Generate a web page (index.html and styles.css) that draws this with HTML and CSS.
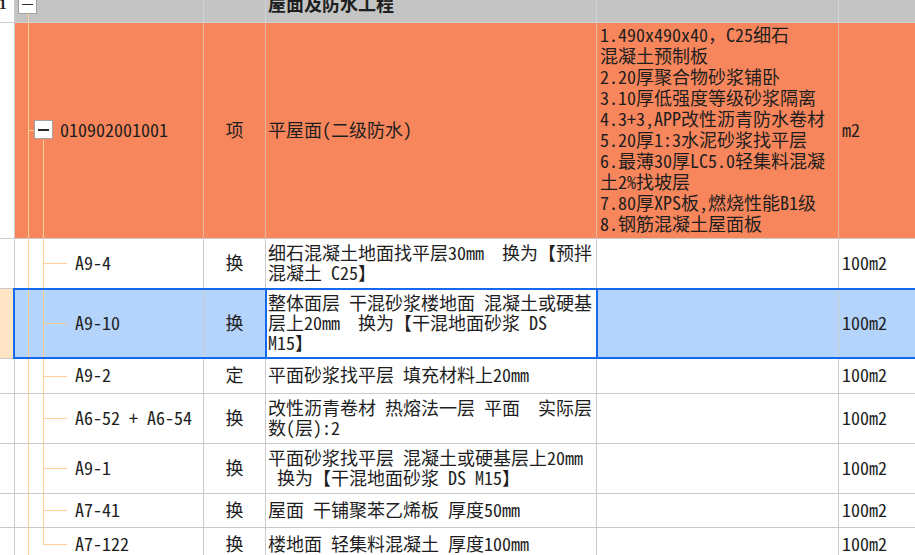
FILE: index.html
```html
<!DOCTYPE html>
<html lang="zh-CN">
<head>
<meta charset="utf-8">
<title>清单</title>
<link rel="stylesheet" href="styles.css">
</head>
<body>
<div class="sheet">
  <div class="row grp">
    <div class="c num"><b>1</b></div>
    <div class="c tree"><span class="box"></span></div>
    <div class="c type"></div>
    <div class="c name"><b>屋面及防水工程</b></div>
    <div class="c feat"></div>
    <div class="c unit"></div>
  </div>
  <div class="row item">
    <div class="c num"></div>
    <div class="c tree"><span class="box"></span><span class="code">010902001001</span></div>
    <div class="c type">项</div>
    <div class="c name">平屋面(二级防水)</div>
    <div class="c feat"><div class="lines">1.490x490x40<span class="fw">，</span>C25细石<br>混凝土预制板<br>2.20厚聚合物砂浆铺卧<br>3.10厚低强度等级砂浆隔离<br>4.3+3,APP改性沥青防水卷材<br>5.20厚1:3水泥砂浆找平层<br>6.最薄30厚LC5.0轻集料混凝<br>土2%找坡层<br>7.80厚XPS板,燃烧性能B1级<br>8.钢筋混凝土屋面板</div></div>
    <div class="c unit">m2</div>
  </div>
  <div class="row sub h50">
    <div class="c num"></div>
    <div class="c tree">A9-4</div>
    <div class="c type">换</div>
    <div class="c name">细石混凝土地面找平层30mm  换为【预拌<br>混凝土 C25】</div>
    <div class="c feat"></div>
    <div class="c unit">100m2</div>
  </div>
  <div class="row sub sel h70">
    <div class="c num"></div>
    <div class="c tree">A9-10</div>
    <div class="c type">换</div>
    <div class="c name">整体面层 干混砂浆楼地面 混凝土或硬基<br>层上20mm  换为【干混地面砂浆 DS<br>M15】</div>
    <div class="c feat"></div>
    <div class="c unit">100m2</div>
  </div>
  <div class="row sub h35">
    <div class="c num"></div>
    <div class="c tree">A9-2</div>
    <div class="c type">定</div>
    <div class="c name">平面砂浆找平层 填充材料上20mm</div>
    <div class="c feat"></div>
    <div class="c unit">100m2</div>
  </div>
  <div class="row sub h50">
    <div class="c num"></div>
    <div class="c tree">A6-52 + A6-54</div>
    <div class="c type">换</div>
    <div class="c name">改性沥青卷材 热熔法一层 平面  实际层<br>数(层):2</div>
    <div class="c feat"></div>
    <div class="c unit">100m2</div>
  </div>
  <div class="row sub h50">
    <div class="c num"></div>
    <div class="c tree">A9-1</div>
    <div class="c type">换</div>
    <div class="c name">平面砂浆找平层 混凝土或硬基层上20mm<br> 换为【干混地面砂浆 DS M15】</div>
    <div class="c feat"></div>
    <div class="c unit">100m2</div>
  </div>
  <div class="row sub h34">
    <div class="c num"></div>
    <div class="c tree">A7-41</div>
    <div class="c type">换</div>
    <div class="c name">屋面 干铺聚苯乙烯板 厚度50mm</div>
    <div class="c feat"></div>
    <div class="c unit">100m2</div>
  </div>
  <div class="row sub last h34">
    <div class="c num"></div>
    <div class="c tree">A7-122</div>
    <div class="c type">换</div>
    <div class="c name">楼地面 轻集料混凝土 厚度100mm</div>
    <div class="c feat"></div>
    <div class="c unit">100m2</div>
  </div>
</div>
</body>
</html>
```
FILE: styles.css
```css
* { box-sizing: border-box; margin: 0; padding: 0; }
html, body { background: #fff; overflow: hidden; }
body {
  margin: 0;
  font-family: "Noto Sans Mono CJK SC", "Noto Sans CJK SC", sans-serif;
  font-feature-settings: "hwid" 1;
  font-size: 18px;
  color: #1e1e1e;
}
.sheet { margin-top: -14px; }

.row {
  display: grid;
  grid-template-columns: 15px 189px 62px 331px 242px 80px;
  position: relative;
}
.c {
  display: flex;
  align-items: center;
  padding-bottom: 4px;
  border-right: 1px solid #cbcbcb;
  border-bottom: 1px solid #cbcbcb;
  line-height: 20px;
  white-space: pre;
  overflow: hidden;
}
.num { font-size: 15px; font-family: "Liberation Serif", serif; }
.type { justify-content: center; }
.name { padding-left: 2px; }
.unit { padding-left: 3px; border-right: none; }
.feat { padding-left: 3px; }
.fw { font-feature-settings: normal; }

.box {
  width: 19px;
  height: 19px;
  flex: none;
  background: #fff;
  border: 1px solid #a3a3a3;
  position: relative;
}
.box::after {
  content: "";
  position: absolute;
  left: 3px;
  right: 3px;
  top: 8px;
  height: 1.5px;
  background: #2a2a2a;
}

/* group row */
.grp { height: 37px; }
.grp .c:not(.num) { background-color: #c4c4c4; border-color: #d2d2d2; }
.grp .num b { margin-left: -1px; margin-top: 4px; }
.grp .name b { margin-top: 1px; }
.grp .tree {
  padding-left: 3px;
  padding-bottom: 0;
  background-image: linear-gradient(#ffcf96, #ffcf96);
  background-repeat: no-repeat;
  background-size: 1px 10px;
  background-position: 13px 100%;
}

/* bill item row */
.item { height: 216px; }
.item .c:not(.num) { background-color: #f7865c; border-right-color: #e4b6a4; }
.item .feat {
  align-items: flex-start;
  line-height: 21px;
  padding-top: 1px;
  padding-bottom: 0;
}
.item .tree {
  padding-bottom: 0;
  background-image:
    linear-gradient(#ffcf96, #ffcf96),
    linear-gradient(#ffcf96, #ffcf96),
    linear-gradient(#ffcf96, #ffcf96);
  background-repeat: no-repeat;
  background-size: 1px 100%, 6px 1px, 1px 98px;
  background-position: 13px 0, 13px 50%, 28px 100%;
}
.item .tree .box { margin-left: 19px; margin-top: -2px; }
.item .code { margin-left: 7px; margin-top: -4px; }

/* sub rows */
.h34 { height: 34px; }
.h35 { height: 35px; }
.h50 { height: 50px; }
.h70 { height: 70px; }
.sub .tree {
  padding-left: 60px;
  background-image:
    linear-gradient(#ffcf96, #ffcf96),
    linear-gradient(#ffcf96, #ffcf96),
    linear-gradient(#ffcf96, #ffcf96);
  background-repeat: no-repeat;
  background-size: 1px 100%, 1px 100%, 24px 1px;
  background-position: 13px 0, 28px 0, 28px 50%;
}
.sub.last .tree { background-size: 1px 100%, 1px 50%, 24px 1px; }

/* selected row */
.sel .c { background-color: #b4d4fc; }
.sel .num { background-color: #fde5c6; }
.sel .name { background-color: #fff; position: relative; overflow: visible; }
.sel .name::before {
  content: "";
  position: absolute;
  top: -1px;
  bottom: 0;
  left: -1px;
  right: -2px;
  border-left: 2px solid #1469ef;
  border-right: 2px solid #1469ef;
}
.sel::after {
  content: "";
  position: absolute;
  left: 13px;
  right: -4px;
  top: -1px;
  bottom: 0;
  border: 2px solid #1469ef;
  pointer-events: none;
}
```
